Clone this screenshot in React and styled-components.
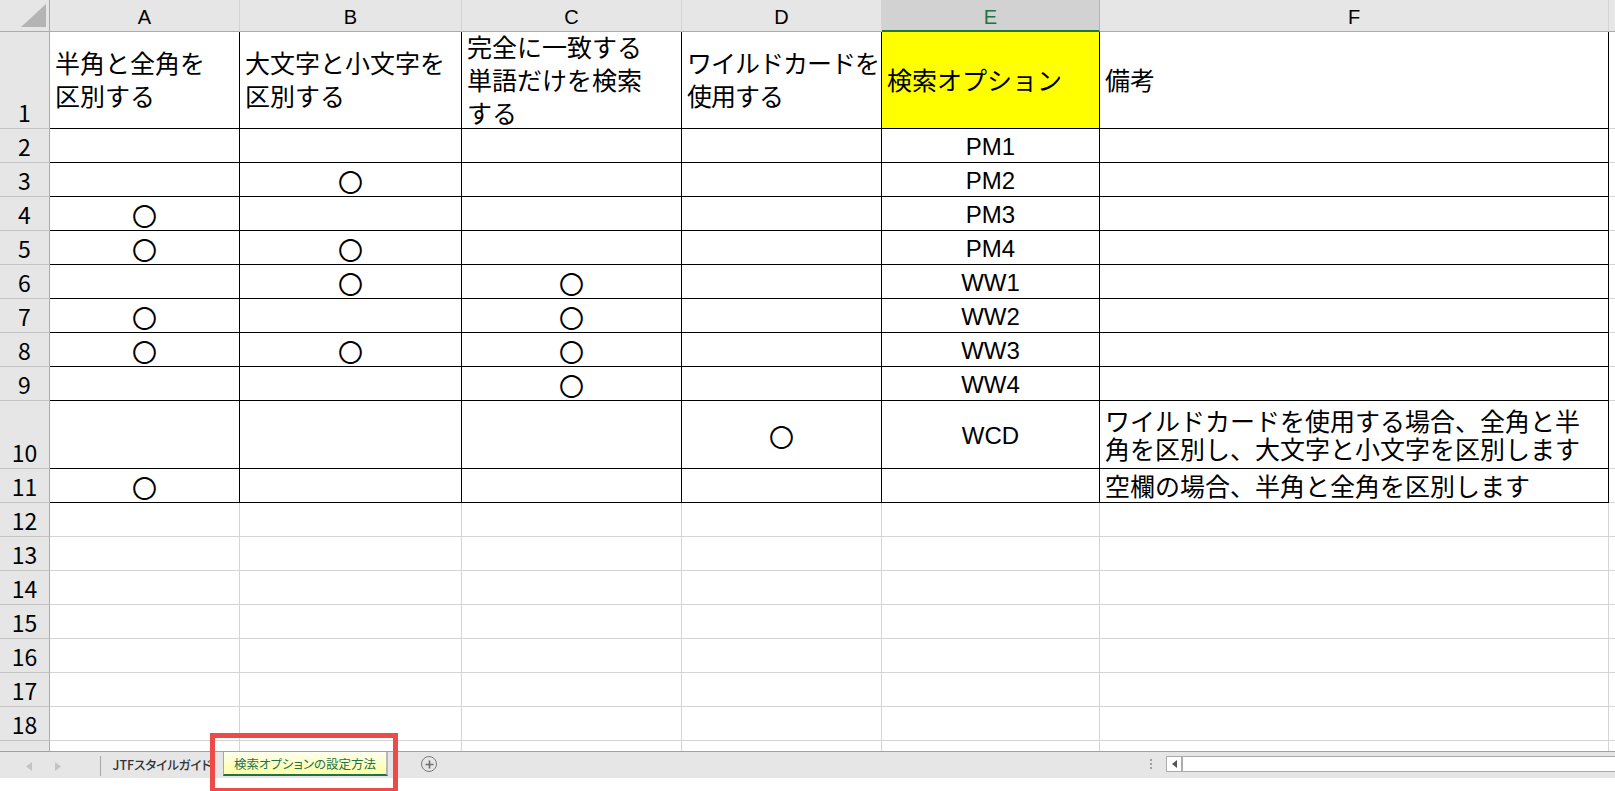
import React from "react";
import styled, { createGlobalStyle } from "styled-components";

const GlobalStyle = createGlobalStyle`
  html, body {
    margin: 0;
    padding: 0;
    background: #fff;
  }
  body {
    overflow: hidden;
  }
`;

const COLUMNS = [
  { key: "A", width: 190 },
  { key: "B", width: 222 },
  { key: "C", width: 220 },
  { key: "D", width: 200 },
  { key: "E", width: 218, active: true },
  { key: "F", width: 509 },
  { key: "G", width: 120, hidden: true },
];

const HEADER_LINES = {
  A: ["半角と全角を", "区別する"],
  B: ["大文字と小文字を", "区別する"],
  C: ["完全に一致する", "単語だけを検索", "する"],
  D: ["ワイルドカードを", "使用する"],
  E: ["検索オプション"],
  F: ["備考"],
};

const MARKS = {
  3: ["B"],
  4: ["A"],
  5: ["A", "B"],
  6: ["B", "C"],
  7: ["A", "C"],
  8: ["A", "B", "C"],
  9: ["C"],
  10: ["D"],
  11: ["A"],
};

const CODES = {
  2: "PM1",
  3: "PM2",
  4: "PM3",
  5: "PM4",
  6: "WW1",
  7: "WW2",
  8: "WW3",
  9: "WW4",
  10: "WCD",
};

const NOTES = {
  10: ["ワイルドカードを使用する場合、全角と半", "角を区別し、大文字と小文字を区別します"],
  11: ["空欄の場合、半角と全角を区別します"],
};

const Page = styled.div`
  position: relative;
  width: 1615px;
  height: 791px;
  overflow: hidden;
  background: #fff;
  font-family: "Liberation Sans", "Noto Sans CJK JP", sans-serif;
`;

const SheetArea = styled.div`
  height: 751px;
  overflow: hidden;
`;

const Grid = styled.div`
  display: grid;
  grid-template-columns: 50px ${COLUMNS.map((c) => c.width + "px").join(" ")};
  grid-template-rows: 32px 97px repeat(8, 34px) 68px repeat(9, 34px);
  width: max-content;
`;

const Corner = styled.div`
  box-sizing: border-box;
  background: #e6e6e6;
  border-right: 1px solid #ababab;
  border-bottom: 1px solid #ababab;
  display: flex;
  align-items: flex-end;
  justify-content: flex-end;
  padding: 0 3px 4px 0;
`;

const ColHeader = styled.div`
  box-sizing: border-box;
  display: flex;
  align-items: center;
  justify-content: center;
  padding-top: 4px;
  font-size: 20px;
  background: ${(p) => (p.$active ? "#d2d2d2" : "#e6e6e6")};
  color: ${(p) => (p.$active ? "#217346" : "#000")};
  border-right: 1px solid ${(p) => (p.$active ? "#b4b4b4" : "#d4d4d4")};
  border-bottom: ${(p) => (p.$active ? "2px solid #217346" : "1px solid #ababab")};
`;

const RowHeader = styled.div`
  box-sizing: border-box;
  background: #e6e6e6;
  border-right: 1px solid #ababab;
  border-bottom: 1px solid #c4c4c4;
  display: flex;
  align-items: flex-end;
  justify-content: center;
  padding-bottom: 4px;
  font-family: "Noto Sans CJK JP", sans-serif;
  font-size: 23px;
  line-height: 24px;
  color: #000;
`;

const Cell = styled.div`
  box-sizing: border-box;
  min-width: 0;
  overflow: ${(p) => (p.$clip ? "hidden" : "visible")};
  display: flex;
  flex-direction: column;
  justify-content: center;
  align-items: ${(p) => (p.$center ? "center" : "flex-start")};
  padding: 2px 5px 0;
  background: ${(p) => p.$fill || "#fff"};
  border-right: 1px solid ${(p) => (p.$boxed ? "#000" : "#d4d4d4")};
  border-bottom: 1px solid ${(p) => (p.$boxed ? "#000" : "#d4d4d4")};
  font-size: 25px;
  line-height: ${(p) => p.$lh || 34}px;
  letter-spacing: ${(p) => (p.$tight ? "-1px" : "0")};
  white-space: nowrap;
  color: #000;
`;

const Line = styled.span`
  display: block;
`;

const Mark = styled.span`
  font-family: "Noto Sans CJK JP", sans-serif;
  font-size: 25px;
  line-height: 27px;
  margin-top: 2px;
`;

const Code = styled.span`
  font-size: 24px;
  line-height: 28px;
`;

const TabBar = styled.div`
  display: flex;
  align-items: flex-start;
  height: 27px;
  box-sizing: border-box;
  background: #e6e6e6;
  border-top: 1px solid #a0a0a0;
`;

const NavArea = styled.div`
  box-sizing: border-box;
  width: 101px;
  display: flex;
  align-items: center;
  gap: 23px;
  padding-left: 26px;
  border-right: 1px solid #a6a6a6;
  margin-top: 4px;
  height: 20px;
`;

const SheetTab = styled.div`
  box-sizing: border-box;
  display: flex;
  align-items: center;
  justify-content: center;
  width: ${(p) => p.$w}px;
  height: 24px;
  font-family: "Noto Sans CJK JP", sans-serif;
  font-size: 12.5px;
  font-weight: ${(p) => (p.$active ? 400 : 500)};
  font-feature-settings: "palt";
  color: ${(p) => (p.$active ? "#217346" : "#333")};
  background: ${(p) => (p.$active ? "linear-gradient(#fffff0, #ffffa6)" : "transparent")};
  border-left: ${(p) => (p.$active ? "1px solid #a6a6a6" : "none")};
  border-right: ${(p) => (p.$active ? "2px solid #b8b8b8" : "none")};
  border-bottom: ${(p) => (p.$active ? "2px solid #217346" : "none")};
  padding-top: ${(p) => (p.$active ? "1px" : "0")};
`;

const AddButton = styled.div`
  box-sizing: border-box;
  width: 16px;
  height: 16px;
  margin: 4px 0 0 33px;
  border: 1.5px solid #7a7a7a;
  border-radius: 50%;
  display: flex;
  align-items: center;
  justify-content: center;
`;

const RightArea = styled.div`
  margin-left: auto;
  width: 468px;
  display: flex;
  align-items: center;
  height: 24px;
  gap: 14px;
`;

const Grip = styled.div`
  display: flex;
  flex-direction: column;
  gap: 2px;
  padding-left: 3px;

  span {
    display: block;
    width: 2px;
    height: 2px;
    background: #a0a0a0;
  }
`;

const ScrollBar = styled.div`
  box-sizing: border-box;
  flex: 1;
  height: 16px;
  display: flex;
  border: 1px solid #ababab;
  border-right: none;
  background: #fff;
`;

const ScrollButton = styled.div`
  width: 14px;
  display: flex;
  align-items: center;
  justify-content: center;
  border-right: 2px solid #ababab;
`;

const Annotation = styled.div`
  position: absolute;
  left: 210px;
  top: 733px;
  width: 188px;
  height: 60px;
  box-sizing: border-box;
  border: 5px solid #ef4a4a;
  pointer-events: none;
`;

function HeaderCell({ col }) {
  const lines = HEADER_LINES[col.key];
  if (!lines) return <Cell />;
  return (
    <Cell
      $boxed
      $clip
      $fill={col.key === "E" ? "#ffff00" : undefined}
      $lh={33}
      $tight={col.key === "D"}
    >
      {lines.map((l) => (
        <Line key={l}>{l}</Line>
      ))}
    </Cell>
  );
}

function BodyCell({ row, col }) {
  const boxed = row <= 11 && col.key !== "G";
  if (!boxed) return <Cell />;

  if (col.key === "E") {
    return (
      <Cell $boxed $center>
        {CODES[row] && <Code>{CODES[row]}</Code>}
      </Cell>
    );
  }
  if (col.key === "F") {
    const lines = NOTES[row] || [];
    return (
      <Cell $boxed $lh={28}>
        {lines.map((l) => (
          <Line key={l}>{l}</Line>
        ))}
      </Cell>
    );
  }
  const marked = (MARKS[row] || []).includes(col.key);
  return <Cell $boxed $center>{marked && <Mark>〇</Mark>}</Cell>;
}

export default function App() {
  const bodyRows = [];
  for (let r = 2; r <= 19; r++) bodyRows.push(r);

  return (
    <Page>
      <GlobalStyle />
      <SheetArea>
        <Grid>
          <Corner>
            <svg width="25" height="23" viewBox="0 0 25 23">
              <polygon points="25,0 25,23 0,23" fill="#b4b4b4" />
            </svg>
          </Corner>
          {COLUMNS.map((c) => (
            <ColHeader key={c.key} $active={c.active}>
              {c.hidden ? null : c.key}
            </ColHeader>
          ))}

          <RowHeader>1</RowHeader>
          {COLUMNS.map((c) => (
            <HeaderCell key={c.key} col={c} />
          ))}

          {bodyRows.map((r) => (
            <React.Fragment key={r}>
              <RowHeader>{r < 19 ? r : null}</RowHeader>
              {COLUMNS.map((c) => (
                <BodyCell key={c.key} row={r} col={c} />
              ))}
            </React.Fragment>
          ))}
        </Grid>
      </SheetArea>

      <TabBar>
        <NavArea>
          <svg width="6" height="9" viewBox="0 0 6 9">
            <polygon points="6,0 6,9 0,4.5" fill="#c4c4c4" />
          </svg>
          <svg width="6" height="9" viewBox="0 0 6 9">
            <polygon points="0,0 0,9 6,4.5" fill="#c4c4c4" />
          </svg>
        </NavArea>
        <SheetTab $w={122}>JTFスタイルガイド</SheetTab>
        <SheetTab $w={165} $active>
          検索オプションの設定方法
        </SheetTab>
        <AddButton>
          <svg width="9" height="9" viewBox="0 0 9 9">
            <path d="M4.5 0.5v8M0.5 4.5h8" stroke="#6e6e6e" strokeWidth="1.6" />
          </svg>
        </AddButton>
        <RightArea>
          <Grip>
            <span />
            <span />
            <span />
          </Grip>
          <ScrollBar>
            <ScrollButton>
              <svg width="5" height="8" viewBox="0 0 5 8">
                <polygon points="5,0 5,8 0,4" fill="#555" />
              </svg>
            </ScrollButton>
          </ScrollBar>
        </RightArea>
      </TabBar>

      <Annotation />
    </Page>
  );
}
